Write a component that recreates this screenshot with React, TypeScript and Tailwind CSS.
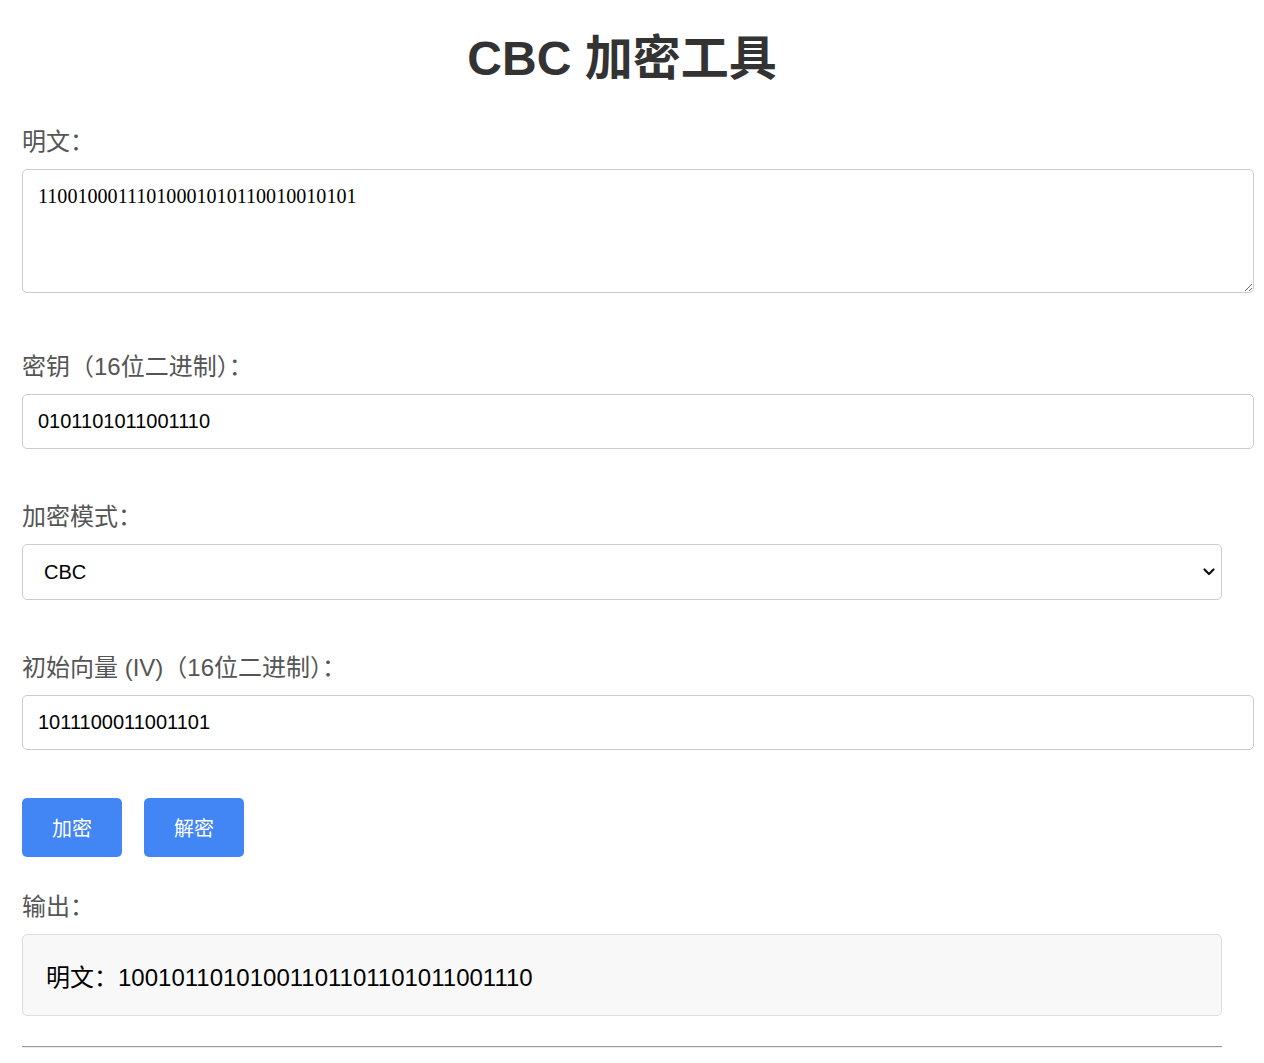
import { useState } from 'react';

const font = { fontFamily: '"Liberation Sans", "Noto Sans CJK SC", sans-serif' };

const Label = ({ children }: { children: React.ReactNode }) => (
  <label className="block pt-[2px] text-[24px] leading-[30px] text-[#555]">{children}</label>
);

const App = () => {
  const [plain, setPlain] = useState('11001000111010001010110010010101');
  const [key, setKey] = useState('0101101011001110');
  const [mode, setMode] = useState('CBC');
  const [iv, setIv] = useState('1011100011001101');

  return (
    <div className="min-h-screen bg-white" style={font}>
      <div className="ml-[22px] w-[1200px] pt-[31px]">
        <h1 className="text-center text-[48px] leading-[56px] font-bold text-[#333]">
          CBC 加密工具
        </h1>

        <div className="mt-[38px]">
          <Label>明文：</Label>
          <textarea
            value={plain}
            onChange={(e) => setPlain(e.target.value)}
            className="mt-[12px] block h-[124px] w-[1232px] rounded-[5px] border border-[#ccc] bg-white px-[15px] py-[13px] text-[20.1px] leading-[26px] text-black outline-none"
            style={{ fontFamily: '"Liberation Serif", serif' }}
          />
        </div>

        <div className="mt-[57px]">
          <Label>密钥（16位二进制）：</Label>
          <input
            value={key}
            onChange={(e) => setKey(e.target.value)}
            className="mt-[12px] block h-[55px] w-[1232px] rounded-[5px] border border-[#ccc] bg-white px-[15px] text-[20px] text-black outline-none"
          />
        </div>

        <div className="mt-[51px]">
          <Label>加密模式：</Label>
          <div className="relative mt-[12px] h-[56px] w-[1200px]">
            <select
              value={mode}
              onChange={(e) => setMode(e.target.value)}
              className="block h-full w-full appearance-none rounded-[5px] border border-[#ccc] bg-white pl-[21px] text-[20px] text-black outline-none"
            >
              <option value="CBC">CBC</option>
              <option value="ECB">ECB</option>
            </select>
            <svg
              className="pointer-events-none absolute right-[6px] top-[21px]"
              width="14"
              height="14"
              viewBox="0 0 14 14"
              fill="none"
              stroke="#111"
              strokeWidth="2.2"
              strokeLinecap="round"
              strokeLinejoin="round"
            >
              <path d="M2.5 4.5 7 9l4.5-4.5" />
            </svg>
          </div>
        </div>

        <div className="mt-[51px]">
          <Label>初始向量 (IV)（16位二进制）：</Label>
          <input
            value={iv}
            onChange={(e) => setIv(e.target.value)}
            className="mt-[12px] block h-[55px] w-[1232px] rounded-[5px] border border-[#ccc] bg-white px-[15px] text-[20px] text-black outline-none"
          />
        </div>

        <div className="mt-[48px] flex gap-[22px]">
          <button className="h-[59px] w-[100px] rounded-[5px] bg-[#4285f4] pt-[2px] text-[20px] text-white">
            加密
          </button>
          <button className="h-[59px] w-[100px] rounded-[5px] bg-[#4285f4] pt-[2px] text-[20px] text-white">
            解密
          </button>
        </div>

        <div className="mt-[33px]">
          <Label>输出：</Label>
          <div className="mt-[12px] flex h-[82px] w-[1200px] items-center rounded-[5px] border border-[#ddd] bg-[#f8f8f8] px-[23px] pt-[6px] text-[24px] text-black">
            明文：10010110101001101101101011001110
          </div>
        </div>

        <div className="mt-[30px] h-[2px] w-[1200px] border-t border-[#999] border-b border-b-[#eee]" />
      </div>
    </div>
  );
};

export default App;
